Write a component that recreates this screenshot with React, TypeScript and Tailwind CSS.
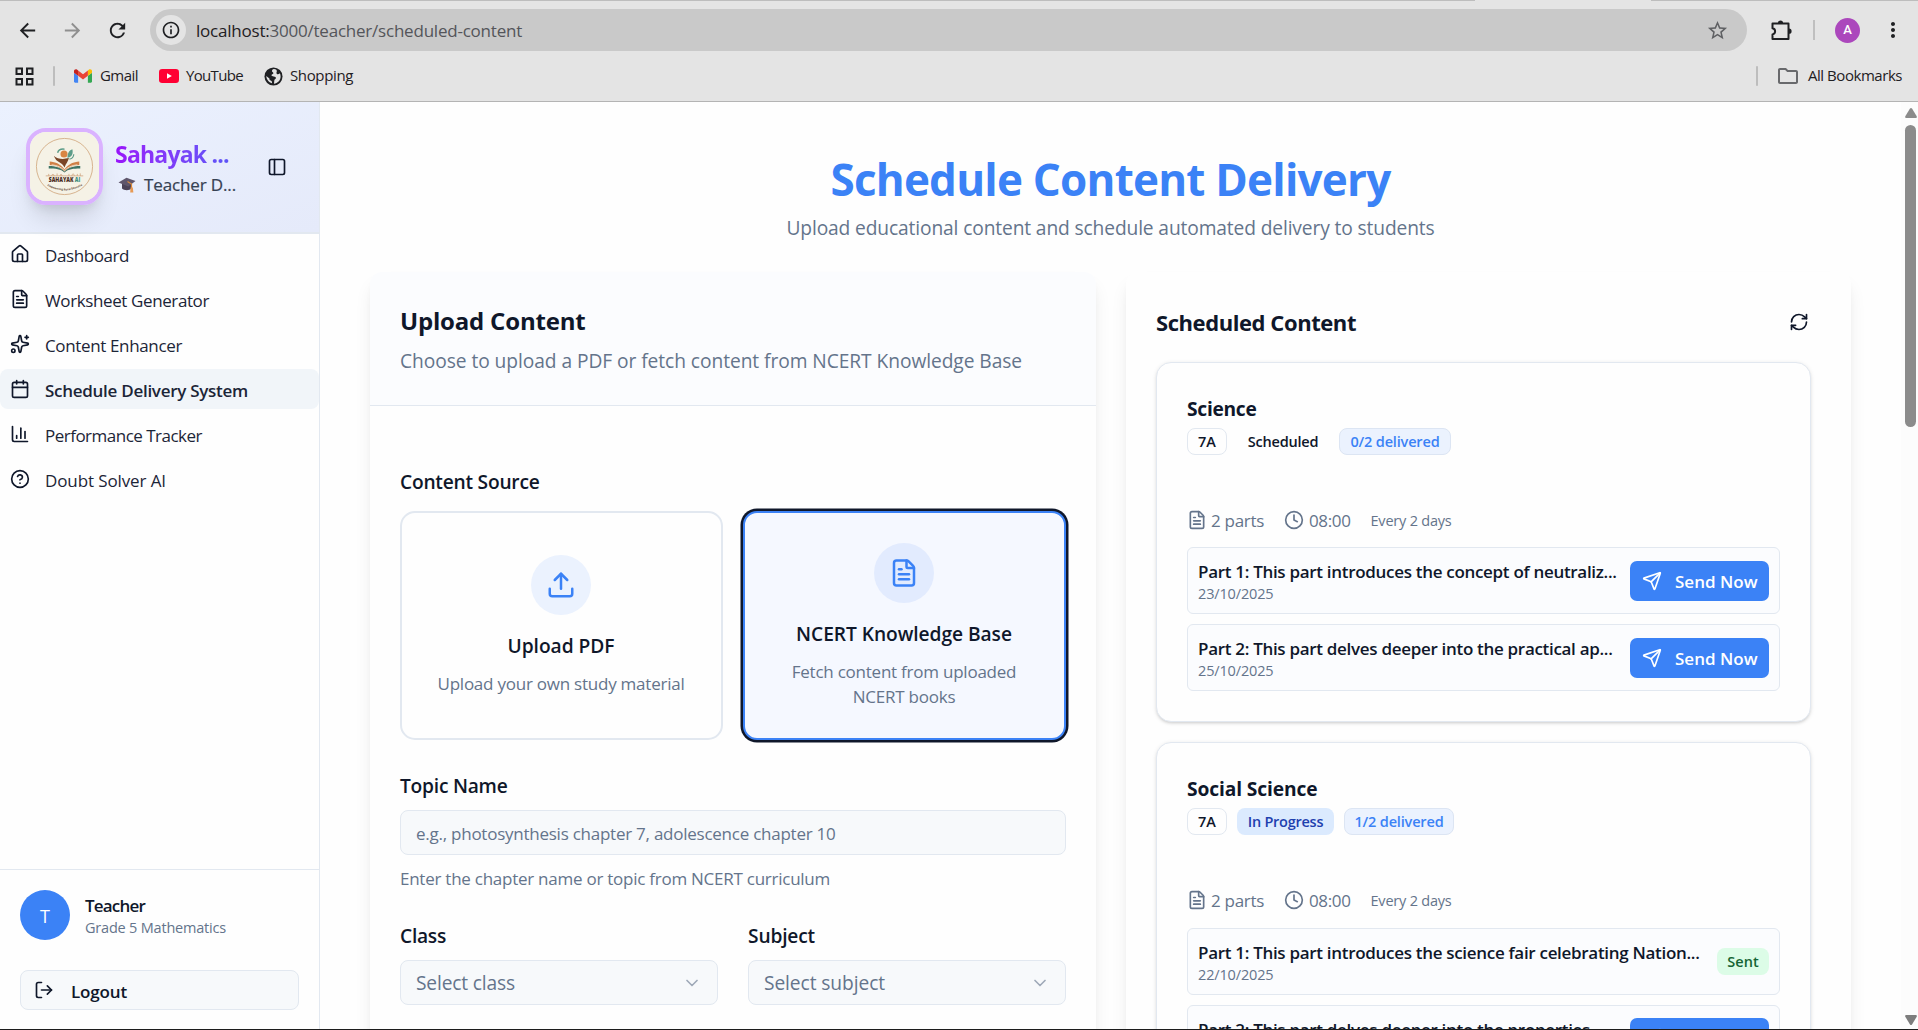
import type { ReactNode } from "react";
import {
  Calendar,
  ChartColumn,
  ChevronDown,
  CircleQuestionMark,
  Clock,
  FileText,
  House,
  LogOut,
  PanelLeft,
  RefreshCw,
  Send,
  Sparkles,
  Upload,
} from "lucide-react";
import {
  MdArrowBack,
  MdArrowForward,
  MdInfoOutline,
  MdMoreVert,
  MdOutlineFolder,
  MdRefresh,
  MdStarBorder,
} from "react-icons/md";

function GmailIcon() {
  return (
    <svg viewBox="0 0 24 18" className="h-[14px] w-[18px]">
      <path fill="#4285f4" d="M1.6 18h3.9V8.7L0 4.6v11.8C0 17.3.7 18 1.6 18z" />
      <path fill="#34a853" d="M18.5 18h3.9c.9 0 1.6-.7 1.6-1.6V4.6l-5.500 4.1z" />
      <path fill="#fbbc04" d="M18.500 1.700v7L24 4.600V2.400c0-2-2.300-3.200-3.900-2z" />
      <path fill="#ea4335" d="M5.500 8.700v-7L12 6.600l6.500-4.900v7L12 13.600z" />
      <path fill="#c5221f" d="M0 2.400v2.200l5.500 4.100v-7L3.900.4C2.300-.8 0 .4 0 2.400z" />
    </svg>
  );
}

function YouTubeIcon() {
  return (
    <svg viewBox="0 0 20 14" className="h-[14px] w-5">
      <rect width="20" height="14" rx="3.200" fill="#ff0033" />
      <path d="M8 4.200v5.600L12.900 7z" fill="#fff" />
    </svg>
  );
}

function GlobeIcon() {
  return (
    <svg viewBox="0 0 20 20" className="size-[19px]">
      <circle cx="10" cy="10" r="9.500" fill="#1f2023" />
      <path
        d="M10.500 2.200c-1.500.2-2.300 1.300-2 2.600.3 1 1.500.8 1.400 1.900-.1 1-1.900.9-2 2.100 0 .9 1 1.100 2.300 1.100 1.600 0 2.500.8 2.300 2-.2.9-1.400 1-1.600 2l-.4 3.700c3.700-.4 7-3.500 7-7.600 0-1.200-.3-2.300-.8-3.300-1 1-2.500 1.300-3.300.4-.8-1 .2-1.700.1-2.900-.2-1.200-1.400-2-3-2zM2.400 9.600c.2 3.700 2.600 6.700 6 7.600.2-1.400-.1-2.400-1.300-2.900-1.300-.5-1.400-1-1.400-2.200z"
        fill="#e4e4e4"
      />
    </svg>
  );
}

function AppsIcon() {
  return (
    <svg viewBox="0 0 19 19" className="h-[19px] w-[19px]" fill="none" stroke="#1f2023" strokeWidth="2">
      <rect x="1.500" y="1.500" width="5.500" height="5.500" />
      <rect x="12" y="1.500" width="5.500" height="5.500" />
      <rect x="1.500" y="12" width="5.500" height="5.500" />
      <rect x="12" y="12" width="5.500" height="5.500" />
    </svg>
  );
}

function ExtensionIcon() {
  return (
    <svg viewBox="0 0 22 22" className="h-[22px] w-[22px]">
      <path
        d="M2.500 4.500h16v15.500h-16v-4.600c1.500-.3 2.600-1.500 2.600-3.100s-1.100-2.800-2.600-3.100z"
        fill="none"
        stroke="#1f2023"
        strokeWidth="2"
        strokeLinejoin="round"
      />
      <path d="M7.900 4a2.600 2.600 0 0 1 5.200 0zM19 9.600a2.600 2.600 0 0 1 0 5.200z" fill="#1f2023" />
    </svg>
  );
}

function SahayakLogo() {
  return (
    <svg viewBox="0 0 70 70" className="h-full w-full">
      <rect width="70" height="70" fill="#f5f2e6" />
      <circle cx="35" cy="35" r="28.500" fill="none" stroke="#d3ac84" strokeWidth="0.900" />
      <circle cx="34.500" cy="22.300" r="3.600" fill="#d98543" />
      <path d="M38 26c0-5 2-7.500 5-8.500 1 4-.5 8.500-5 8.500z" fill="#5c9c88" />
      <path d="M28 21c1-3 4-4 7-3.600" fill="none" stroke="#5c9c88" strokeWidth="1.500" />
      <path d="M40 27.500c2.500-.4 4.200-2 4.400-5" fill="none" stroke="#5c9c88" strokeWidth="1.200" />
      <path d="M24 24c4 3.500 9 4 15.500 2.500-1 4-3 5.500-4.500 9.500-2-4-6-5.500-8.500-7.500z" fill="#7a4526" />
      <path d="M20 30c6 .5 11 2.500 15 8 4-5.500 9-7.500 15-8v3.500c-6 .5-10.500 2-15 7-4.500-5-9-6.500-15-7z" fill="#cf8047" />
      <path d="M19 34.500c7 0 12 1.500 16 5.500 4-4 9-5.500 16-5.500V37c-7 0-12 .5-16 4-4-3.500-9-4-16-4z" fill="#3f7466" />
      <path d="M22 33.300c6 .6 10 2.500 13 6 3-3.500 7-5.400 13-6" fill="none" stroke="#f5f2e6" strokeWidth="0.800" />
      <path
        d="M16 44.500h38M19 44.500v-2m3 2c0-2 2.500-2 2.500 0m3 0v-2.500m3 2.500c0-2 2-2 2 0m7 0v-2m3 2c0-2.500 2.500-2.500 2.500 0m3 0v-2m3 2v-2.500"
        fill="none"
        stroke="#cda27c"
        strokeWidth="0.800"
      />
      <text x="19" y="51.200" textLength="32" lengthAdjust="spacingAndGlyphs" fontSize="6.200" fontWeight="800" fontFamily="Open Sans" fill="#4b2b22">
        SAHAYAK <tspan fill="#3f8f80">AI</tspan>
      </text>
      <path id="motto" d="M17.500 54.500Q35 64 52.500 54.500" fill="none" />
      <text fontSize="2.700" fontWeight="700" fontFamily="Open Sans" fill="#5a3a2c">
        <textPath href="#motto">Empowering Rural Education</textPath>
      </text>
    </svg>
  );
}

function GraduationCap() {
  return (
    <svg viewBox="0 0 18 16" className="h-4 w-[18px]">
      <path d="M4 6.500v5c2 2.300 7.500 2.300 9.500 0v-5z" fill="#4c4358" />
      <path d="M.5 5.500 8.500.8l9 3.200-7.200 5.500z" fill="#5f566c" />
      <path d="m9.500 4.500 4 2.500v4" fill="none" stroke="#d98a3c" strokeWidth="1.200" />
      <path d="M12.500 10.500h2.300l.6 5h-3.200z" fill="#e79a55" />
    </svg>
  );
}

function BrowserBar() {
  return (
    <header className="h-[102px] shrink-0 border-b border-[#b4b4b4] bg-[#e4e4e4] text-[#1f2023]">
      <div className="flex h-px bg-[#bdbdbd]">
        <div className="ml-[1475px] w-[176px] bg-[#e4e4e4]" />
      </div>
      <div className="flex h-[58px] items-center pl-4">
        <MdArrowBack className="size-[23px]" />
        <MdArrowForward className="ml-[22px] size-[23px] text-[#8f8f8f]" />
        <MdRefresh className="ml-[22px] size-[23px]" />
        <div className="ml-[21px] flex h-[42px] w-[1597px] items-center rounded-full bg-[#c9c9c9] pl-[6px] pr-[18px]">
          <div className="flex size-[30px] items-center justify-center rounded-full bg-[#e4e4e4]">
            <MdInfoOutline className="size-[20px]" />
          </div>
          <p className="ml-[10px] flex-1 pt-px text-[17px] tracking-[-0.0129em] text-[#54555a]">
            <span className="text-[#1f2023]">localhost:</span>3000/teacher/scheduled-content
          </p>
          <MdStarBorder className="mt-px size-[23px] text-[#5f6063]" />
        </div>
        <div className="ml-[23px] flex items-center">
          <ExtensionIcon />
          <div className="ml-[21px] h-5 w-[2px] bg-[#bfbfbf]" />
          <div className="ml-5 flex size-[25px] items-center justify-center rounded-full bg-[#ab47bc] font-[Roboto] text-[13px] font-medium text-white">
            A
          </div>
          <MdMoreVert className="ml-[21px] size-[24px]" />
        </div>
      </div>
      <div className="flex h-[34px] items-center pl-[15px] pr-4 text-[15px]">
        <AppsIcon />
        <div className="ml-[19px] h-5 w-[2px] rounded bg-[#bdbdbd]" />
        <div className="ml-[19px] flex items-center gap-2">
          <GmailIcon />
          <span className="pb-[2px] tracking-[-0.036em]">Gmail</span>
        </div>
        <div className="ml-[21px] flex items-center gap-[7px]">
          <YouTubeIcon />
          <span className="pb-[2px] tracking-[-0.0445em]">YouTube</span>
        </div>
        <div className="ml-[21px] flex items-center gap-[7px]">
          <GlobeIcon />
          <span className="pb-[2px] tracking-[-0.0244em]">Shopping</span>
        </div>
        <div className="ml-auto h-5 w-[2px] rounded bg-[#bdbdbd]" />
        <div className="ml-[18px] flex items-center gap-2">
          <MdOutlineFolder className="size-[24px] text-[#68696c]" />
          <span className="pb-[2px] tracking-[-0.0305em]">All Bookmarks</span>
        </div>
      </div>
    </header>
  );
}

const nav = [
  { label: "Dashboard", icon: House, track: "tracking-[-0.0244em]" },
  { label: "Worksheet Generator", icon: FileText, track: "tracking-[-0.0229em]" },
  { label: "Content Enhancer", icon: Sparkles, track: "tracking-[-0.0209em]" },
  { label: "Schedule Delivery System", icon: Calendar, track: "tracking-[-0.0163em]", active: true },
  { label: "Performance Tracker", icon: ChartColumn, track: "tracking-[-0.0299em]" },
  { label: "Doubt Solver AI", icon: CircleQuestionMark, track: "tracking-[-0.0063em]" },
];

function Sidebar() {
  return (
    <aside className="flex w-80 shrink-0 flex-col border-r border-[#e2e8f0] bg-[#fefefe]">
      <div className="flex h-[132px] shrink-0 items-center border-b-2 border-[#e2e8f0] bg-linear-to-br from-[#ebf1fe] to-[#e5eafa] pb-px pl-[26px] pr-8">
        <div className="z-10 size-[77px] shrink-0 overflow-hidden rounded-[20px] border-4 border-[#dab2ff] shadow-[0_18px_24px_-6px_rgb(0_0_0/0.12),0_8px_12px_-6px_rgb(0_0_0/0.1)]">
          <SahayakLogo />
        </div>
        <div className="ml-3 flex-1 pt-[4px]">
          <p className="bg-linear-to-r from-[#9810fa] to-[#3b5ff6] bg-clip-text text-[23px] leading-8 font-bold tracking-[-0.034em] whitespace-nowrap text-transparent">
            Sahayak ...
          </p>
          <p className="mt-px flex items-center gap-[8px] pl-[3px] text-[17px] leading-7 tracking-[-0.0077em] whitespace-nowrap text-[#364153] [-webkit-text-stroke:0.2px]">
            <GraduationCap />
            Teacher D...
          </p>
        </div>
        <PanelLeft className="size-5 text-[#0f172a]" />
      </div>
      <nav className="flex flex-1 flex-col gap-[5px] text-[17px] text-[#1c2537]">
        {nav.map(({ label, icon: Icon, track, active }) => (
          <div
            key={label}
            className={
              active
                ? "flex h-10 items-center gap-[15px] rounded-[8px] bg-[#f1f5f9] pl-[10px] font-semibold"
                : "flex h-10 items-center gap-[15px] pl-[10px]"
            }
          >
            <Icon className="size-5 text-[#0f172a]" />
            <span className={`pt-[3px] ${track}`}>{label}</span>
          </div>
        ))}
      </nav>
      <div className="h-[160px] shrink-0 border-t border-[#e2e8f0] px-5 pt-5">
        <div className="flex items-center gap-[15px]">
          <div className="flex size-[50px] items-center justify-center rounded-full bg-[#3b82f6] pt-[2px] text-[18px] text-white">T</div>
          <div className="pt-[2px]">
            <p className="text-[17px] leading-[23px] font-semibold tracking-[-0.0473em] text-[#0f172a]">Teacher</p>
            <p className="pt-px text-[14.5px] leading-[20px] tracking-[-0.0139em] text-[#64748b]">Grade 5 Mathematics</p>
          </div>
        </div>
        <div className="mt-[30px] flex h-10 items-center rounded-[8px] border border-[#e2e8f0] bg-[#f7f9fb] pl-[13px] text-[#0f172a]">
          <LogOut className="size-5" />
          <span className="ml-[17px] pt-[3px] text-[17px] font-semibold tracking-[-0.0092em]">Logout</span>
        </div>
      </div>
    </aside>
  );
}

function Select({ text, track }: { text: string; track: string }) {
  return (
    <div className="mt-[10px] flex h-[45px] items-center justify-between rounded-[8px] border border-[#e2e8f0] bg-[#f7f9fb] pl-[15px] pr-[15px] text-[19.2px] text-[#64748b]">
      <span className={`pt-px ${track}`}>{text}</span>
      <ChevronDown className="size-5 opacity-60" />
    </div>
  );
}

function UploadPanel() {
  return (
    <section className="h-[900px] w-[726px] shrink-0 rounded-[12px] bg-[#fefefe] shadow-[0_12px_19px_-4px_rgb(0_0_0/0.1),0_5px_8px_-5px_rgb(0_0_0/0.1)]">
      <div className="h-[134px] rounded-t-[12px] border-b border-[#e2e8f0] bg-[#fbfcfe] pt-[33px] pl-[30px]">
        <h2 className="text-[24px] leading-8 font-bold tracking-[-0.0079em]">Upload Content</h2>
        <p className="mt-[10px] text-[19.2px] leading-7 tracking-[-0.0033em] text-[#64748b]">
          Choose to upload a PDF or fetch content from NCERT Knowledge Base
        </p>
      </div>
      <div className="px-[30px] pt-[62px] text-[19.2px] leading-7 font-semibold">
        <p className="tracking-[-0.0122em]">Content Source</p>
        <div className="mt-[15px] grid grid-cols-2 gap-5 text-center">
          <div className="flex h-[229px] flex-col items-center justify-center rounded-[15px] border-2 border-[#e2e8f0] pr-px pb-px">
            <div className="flex size-[60px] items-center justify-center rounded-full bg-[#ebf2fe]">
              <Upload className="size-[30px] text-[#3b82f6]" />
            </div>
            <p className="mt-[17px] tracking-[-0.0021em]">Upload PDF</p>
            <p className="mt-[11px] text-[17px] leading-[25px] font-normal tracking-[-0.0138em] text-[#64748b]">
              Upload your own study material
            </p>
          </div>
          <div className="flex h-[229px] flex-col items-center justify-center rounded-[14px] border-2 border-[#3b82f6] bg-[#f5f8ff] pr-px ring-[2.5px] ring-[#0f172a]">
            <div className="flex size-[60px] items-center justify-center rounded-full bg-[#e2ebfe]">
              <FileText className="size-[30px] text-[#3b82f6]" />
            </div>
            <p className="mt-[17px] tracking-[-0.003em]">NCERT Knowledge Base</p>
            <p className="mt-[11px] text-[17px] leading-[25px] font-normal tracking-[-0.0138em] text-[#64748b]">
              Fetch content from uploaded
              <br />
              NCERT books
            </p>
          </div>
        </div>
        <p className="mt-8 tracking-[-0.0124em]">Topic Name</p>
        <div className="mt-[10px] flex h-[45px] items-center rounded-[8px] border border-[#e2e8f0] bg-[#f7f9fb] pt-[2px] pl-[15px] text-[17px] font-normal tracking-[-0.0145em] text-[#64748b]">
          e.g., photosynthesis chapter 7, adolescence chapter 10
        </div>
        <p className="mt-[12px] text-[17px] leading-6 font-normal tracking-[-0.0149em] text-[#64748b]">
          Enter the chapter name or topic from NCERT curriculum
        </p>
        <div className="mt-[31px] grid grid-cols-2 gap-[30px]">
          <div>
            <p className="tracking-[-0.0138em]">Class</p>
            <div className="font-normal">
              <Select text="Select class" track="tracking-[-0.0083em]" />
            </div>
          </div>
          <div>
            <p className="tracking-[-0.009em]">Subject</p>
            <div className="font-normal">
              <Select text="Select subject" track="tracking-[-0.0046em]" />
            </div>
          </div>
        </div>
      </div>
    </section>
  );
}

function PartRow({ text, date, sent }: { text: string; date: string; sent?: boolean }) {
  return (
    <div className="flex h-[67px] items-center rounded-[6px] border border-[#e2e8f0] bg-[#fbfcfe] px-[10px]">
      <div className="min-w-0 flex-1 overflow-hidden pt-[3px] whitespace-nowrap">
        <p className="text-[17px] leading-[23px] font-semibold tracking-[-0.018em] text-[#0f172a]">{text}</p>
        <p className="text-[14.5px] leading-[21px] tracking-[-0.0101em] text-[#64748b]">{date}</p>
      </div>
      {sent ? (
        <span className="ml-4 flex h-[27px] w-[52px] shrink-0 items-center justify-center rounded-[8px] bg-[#dcfce7] pt-px text-[14.5px] font-semibold text-[#166534]">
          Sent
        </span>
      ) : (
        <button className="ml-3 flex h-10 w-[139px] shrink-0 items-center rounded-[7px] bg-[#3b82f6] pl-3 text-white">
          <Send className="size-5" />
          <span className="ml-[13px] pt-[2px] text-[17px] font-semibold tracking-[0.0001em]">Send Now</span>
        </button>
      )}
    </div>
  );
}

function Badge({ className, children }: { className: string; children: ReactNode }) {
  return (
    <span className={`flex h-[27px] items-center justify-center rounded-[8px] border pt-px text-[14.5px] font-semibold ${className}`}>
      {children}
    </span>
  );
}

function ScheduleCard({ title, track, badges, children }: { title: string; track: string; badges: ReactNode; children: ReactNode }) {
  return (
    <article className="h-[360px] shrink-0 rounded-[15px] border border-[#e2e8f0] bg-[#fefefe] px-[30px] pt-[32px] shadow-[0_1px_4px_rgb(0_0_0/0.1),0_2px_3px_-1px_rgb(0_0_0/0.12)]">
      <h3 className={`text-[19.2px] leading-7 font-bold ${track}`}>{title}</h3>
      <div className="mt-[5px] flex gap-[10px]">{badges}</div>
      <div className="mt-[53px] flex h-6 items-center text-[17px] text-[#64748b]">
        <FileText className="size-5" />
        <span className="ml-[4px] pt-[2px] tracking-[-0.0176em]">2 parts</span>
        <Clock className="ml-[20px] size-5" />
        <span className="ml-[5px] pt-[2px] tracking-[-0.0217em]">08:00</span>
        <span className="ml-5 pt-px text-[14.5px] tracking-[-0.0147em]">Every 2 days</span>
      </div>
      <div className="mt-[15.4px] flex flex-col gap-[10px]">{children}</div>
    </article>
  );
}

function SchedulePanel() {
  return (
    <section className="ml-[30px] flex h-[900px] w-[725px] shrink-0 flex-col rounded-[12px] bg-[#fefefe] pt-[34px] pr-[40px] pl-[30px] shadow-[0_12px_19px_-4px_rgb(0_0_0/0.1),0_5px_8px_-5px_rgb(0_0_0/0.1)]">
      <div className="flex h-8 items-center justify-between">
        <h2 className="text-[22px] leading-8 font-bold tracking-[-0.0194em]">Scheduled Content</h2>
        <RefreshCw className="mr-[2px] size-5" />
      </div>
      <div className="mt-6 flex flex-col gap-[20.2px]">
        <ScheduleCard
          title="Science"
          track="tracking-[-0.0144em]"
          badges={
            <>
              <Badge className="w-[40px] border-[#e2e8f0]">7A</Badge>
              <Badge className="w-[92px] border-transparent tracking-[-0.0146em]">Scheduled</Badge>
              <Badge className="w-[112px] border-[#dce5f3] bg-[#ebf2fe] tracking-[-0.0117em] text-[#3b82f6]">0/2 delivered</Badge>
            </>
          }
        >
          <PartRow text="Part 1: This part introduces the concept of neutraliz..." date="23/10/2025" />
          <PartRow text="Part 2: This part delves deeper into the practical ap..." date="25/10/2025" />
        </ScheduleCard>
        <ScheduleCard
          title="Social Science"
          track="tracking-[-0.0057em]"
          badges={
            <>
              <Badge className="w-[40px] border-[#e2e8f0]">7A</Badge>
              <Badge className="w-[97px] border-transparent bg-[#dbeafe] tracking-[-0.0169em] text-[#1e40af]">In Progress</Badge>
              <Badge className="w-[110px] border-[#dce5f3] bg-[#ebf2fe] tracking-[-0.0117em] text-[#3b82f6]">1/2 delivered</Badge>
            </>
          }
        >
          <PartRow text="Part 1: This part introduces the science fair celebrating Nation..." date="22/10/2025" sent />
          <PartRow text="Part 2: This part delves deeper into the properties..." date="24/10/2025" />
        </ScheduleCard>
      </div>
    </section>
  );
}

function Scrollbar() {
  return (
    <div className="flex w-[17px] shrink-0 flex-col items-center bg-[#fcfcfc] pt-[6px] pb-[4px] pl-[2px]">
      <svg viewBox="0 0 12 10" className="h-[10px] w-3 shrink-0" fill="#8b8b8b">
        <path d="M5 .6q1-1 2 0l4.700 7.600q.5 1.600-.7 1.800H1q-1.200-.2-.7-1.800z" />
      </svg>
      <div className="mt-[7px] h-[302px] w-[11px] rounded-full bg-[#8b8b8b]" />
      <svg viewBox="0 0 12 10" className="mt-auto h-[10px] w-3 shrink-0 rotate-180" fill="#7d7d7d">
        <path d="M5 .6q1-1 2 0l4.700 7.600q.5 1.600-.7 1.800H1q-1.200-.2-.7-1.800z" />
      </svg>
    </div>
  );
}

export default function App() {
  return (
    <div className="flex h-[1030px] w-[1918px] flex-col overflow-hidden border-b border-[#1c1c1c] bg-white font-['Open_Sans',sans-serif]">
      <BrowserBar />
      <div className="flex min-h-0 flex-1">
        <Sidebar />
        <main className="min-w-0 flex-1 overflow-hidden bg-[#fefefe] px-[50px] pt-[52px] text-[#0f172a]">
          <div className="w-[1481px] text-center">
            <h1 className="text-[44px] leading-[50px] font-bold tracking-[-0.0178em] text-[#3b82f6]">Schedule Content Delivery</h1>
            <p className="mt-[10px] text-[19.2px] leading-7 tracking-[-0.0066em] text-[#64748b]">
              Upload educational content and schedule automated delivery to students
            </p>
          </div>
          <div className="mt-[30px] flex">
            <UploadPanel />
            <SchedulePanel />
          </div>
        </main>
        <Scrollbar />
      </div>
    </div>
  );
}
